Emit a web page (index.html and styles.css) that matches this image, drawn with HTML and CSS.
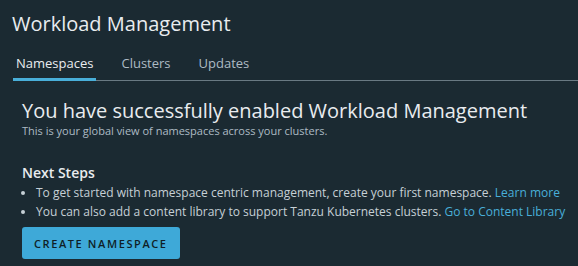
FILE: index.html
```html
<!DOCTYPE html>
<html lang="en">
<head>
    <meta charset="UTF-8">
    <title>Workload Management</title>
    <meta name="viewport" content="width=device-width, initial-scale=1">
    <link rel="stylesheet" href="styles.css">
</head>
<body>

<div class="page">
    <h1 class="title">Workload Management</h1>

    <div class="tabs">
        <a class="tab active">Namespaces</a>
        <a class="tab">Clusters</a>
        <a class="tab">Updates</a>
    </div>

    <div class="content">
        <h2 class="heading">You have successfully enabled Workload Management</h2>
        <div class="subtitle">This is your global view of namespaces across your clusters.</div>

        <h3 class="steps-title">Next Steps</h3>
        <ul class="steps">
            <li>To get started with namespace centric management, create your first namespace. <a class="link">Learn more</a></li>
            <li>You can also add a content library to support Tanzu Kubernetes clusters. <a class="link">Go to Content Library</a></li>
        </ul>

        <button class="button">Create Namespace</button>
    </div>
</div>
</body>
</html>
```

FILE: styles.css
```css
html {
    background-color: #1b2a32;
}

body {
    margin: 0;
    font-family: "Open Sans", sans-serif;
    color: #e9ecef;
}

.page {
    padding-top: 10px;
}

.title {
    margin: 0 0 0 12px;
    font-size: 20px;
    font-weight: 400;
    line-height: 28px;
    color: #e9ecef;
}

.tabs {
    display: flex;
    margin-top: 16px;
    margin-left: 13px;
    border-bottom: 1px solid #6a7a83;
}

.tab {
    padding: 0 3px 6px;
    margin-right: 22px;
    font-size: 13px;
    line-height: 18px;
    color: #adbbc4;
    border-bottom: 3px solid transparent;
    margin-bottom: -1px;
}

.tab.active {
    color: #e9ecef;
    border-bottom-color: #49afd9;
}

.content {
    padding-left: 22px;
    white-space: nowrap;
}

.heading {
    margin: 17px 0 0;
    font-size: 20px;
    font-weight: 400;
    line-height: 26px;
    color: #e9ecef;
}

.subtitle {
    font-size: 11px;
    line-height: 14px;
    color: #adbbc4;
}

.steps-title {
    margin: 25px 0 0;
    font-size: 14px;
    font-weight: 600;
    line-height: 20px;
}

.steps {
    margin: 0;
    padding-left: 14px;
    font-size: 12px;
    line-height: 19px;
    color: #c6d0d6;
}

.link {
    color: #49afd9;
}

.button {
    margin-top: 6px;
    height: 32px;
    padding: 0 12px;
    font-family: "Open Sans", sans-serif;
    font-size: 11px;
    font-weight: 600;
    letter-spacing: 1.6px;
    text-transform: uppercase;
    color: #0f1e26;
    background: #3ea9d8;
    border: none;
    border-radius: 3px;
}
```
